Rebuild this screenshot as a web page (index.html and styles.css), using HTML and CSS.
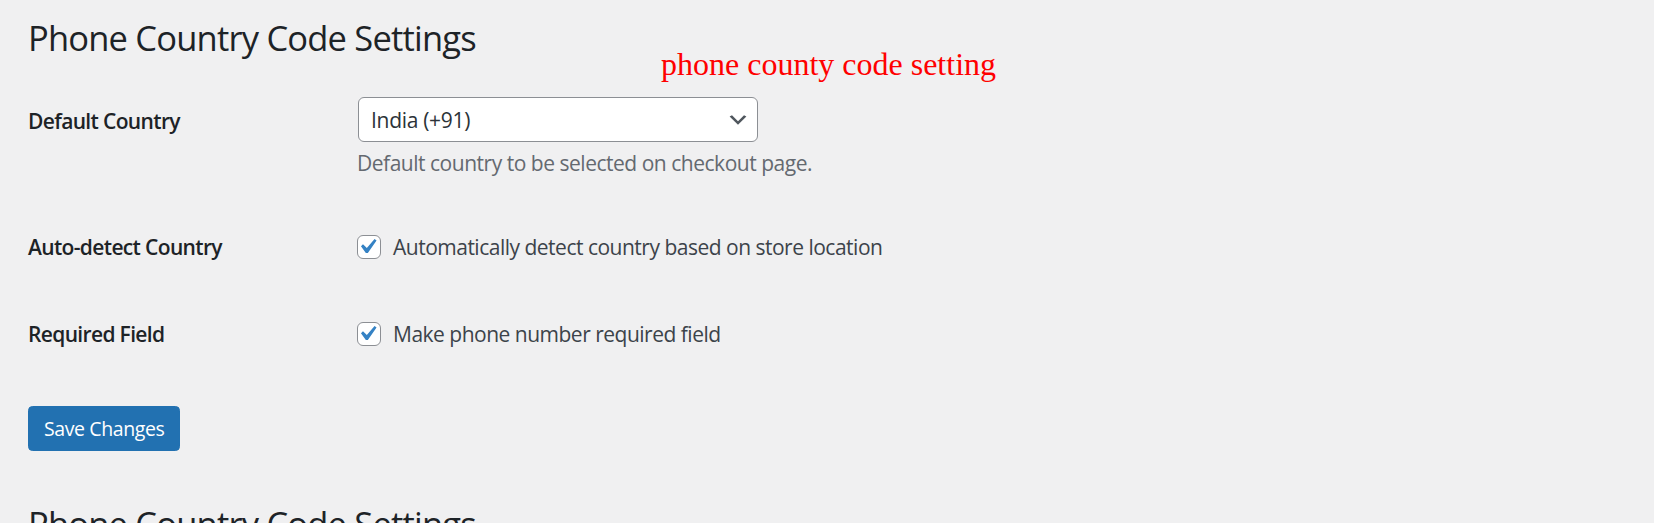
FILE: index.html
```html
<!DOCTYPE html>
<html lang="en">
<head>
<meta charset="utf-8">
<title>Phone Country Code Settings</title>
<link rel="stylesheet" href="styles.css">
</head>
<body>
<div class="wrap">
  <h1 class="page-title">Phone Country Code Settings</h1>
  <p class="note">phone county code setting</p>

  <div class="form-row row-select">
    <div class="field-label">Default Country</div>
    <div class="field">
      <div class="select">
        <span class="select-value">India (+91)</span>
        <svg class="chevron" width="24" height="24" viewBox="0 0 20 20"><path d="M5 6l5 5 5-5 2 1-7 7-7-7 2-1z" fill="#50575e"/></svg>
      </div>
      <p class="description">Default country to be selected on checkout page.</p>
    </div>
  </div>

  <div class="form-row row-check row-auto">
    <div class="field-label">Auto-detect Country</div>
    <div class="field check-field">
      <span class="checkbox"><svg width="24" height="24" viewBox="3.13 2.2 16 16"><path d="M14.83 4.89l1.34.94-5.81 8.38H9.02L5.78 9.67l1.34-1.25 2.57 2.4z" fill="#3582c4"/></svg></span>
      <span class="check-text">Automatically detect country based on store location</span>
    </div>
  </div>

  <div class="form-row row-check row-required">
    <div class="field-label">Required Field</div>
    <div class="field check-field">
      <span class="checkbox"><svg width="24" height="24" viewBox="3.13 2.2 16 16"><path d="M14.83 4.89l1.34.94-5.81 8.38H9.02L5.78 9.67l1.34-1.25 2.57 2.4z" fill="#3582c4"/></svg></span>
      <span class="check-text">Make phone number required field</span>
    </div>
  </div>

  <div class="submit-row">
    <button class="button-primary" type="button">Save Changes</button>
  </div>

  <h1 class="page-title second">Phone Country Code Settings</h1>
</div>
</body>
</html>
```

FILE: styles.css
```css
html, body {
  margin: 0;
  padding: 0;
  background: #f0f0f1;
}

body {
  font-family: "Open Sans", "Noto Sans", sans-serif;
  color: #1d2327;
  overflow: hidden;
  height: 523px;
}

.wrap {
  padding-left: 28px;
}

.page-title {
  margin: 0;
  padding-top: 15px;
  font-size: 34.5px;
  font-weight: 400;
  line-height: 45px;
  letter-spacing: -0.8px;
  color: #1d2327;
  white-space: nowrap;
}

.page-title.second {
  padding-top: 0;
  margin-top: 50px;
}

.note {
  margin: -12px 0 0 633px;
  font-family: "Liberation Serif", "Times New Roman", serif;
  font-size: 32px;
  line-height: 32px;
  color: #ff0000;
}

.form-row {
  display: grid;
  grid-template-columns: 330px 1fr;
}

.field-label {
  font-size: 21px;
  font-weight: 600;
  line-height: 27px;
  letter-spacing: -0.65px;
  color: #1d2327;
}

.row-select {
  margin-top: 17px;
  align-items: start;
}

.row-select .field-label {
  margin-top: 11px;
}

.field {
  min-width: 0;
}

.select {
  box-sizing: border-box;
  width: 400px;
  height: 45px;
  border: 1px solid #8c8f94;
  border-radius: 6px;
  background: #fff;
  display: flex;
  align-items: center;
  justify-content: space-between;
  padding: 0 7px 0 12px;
}

.select-value {
  font-size: 21px;
  letter-spacing: -0.3px;
  color: #2c3338;
}

.chevron {
  display: block;
}

.description {
  margin: 6px 0 0 -1px;
  font-size: 21px;
  line-height: 31.5px;
  letter-spacing: -0.48px;
  color: #646970;
}

.row-check {
  align-items: center;
}

.row-auto {
  margin-top: 54px;
}

.row-required {
  margin-top: 60px;
}

.check-field {
  display: flex;
  align-items: center;
  gap: 12px;
}

.checkbox {
  box-sizing: border-box;
  width: 24px;
  height: 24px;
  border: 1px solid #8c8f94;
  border-radius: 6px;
  background: #fff;
  display: flex;
  align-items: center;
  justify-content: center;
  overflow: hidden;
  margin-left: -1px;
}

.checkbox svg {
  display: block;
  flex: none;
}

.check-text {
  font-size: 21px;
  line-height: 27px;
  letter-spacing: -0.5px;
  color: #3c434a;
}

.submit-row {
  margin-top: 58px;
}

.button-primary {
  box-sizing: border-box;
  height: 45px;
  padding: 0 15px;
  border: 1px solid #2271b1;
  border-radius: 4.5px;
  background: #2271b1;
  color: #fff;
  font-family: "Open Sans", "Noto Sans", sans-serif;
  font-size: 19.5px;
  line-height: 43px;
  letter-spacing: -0.4px;
  cursor: pointer;
  display: block;
}
```
